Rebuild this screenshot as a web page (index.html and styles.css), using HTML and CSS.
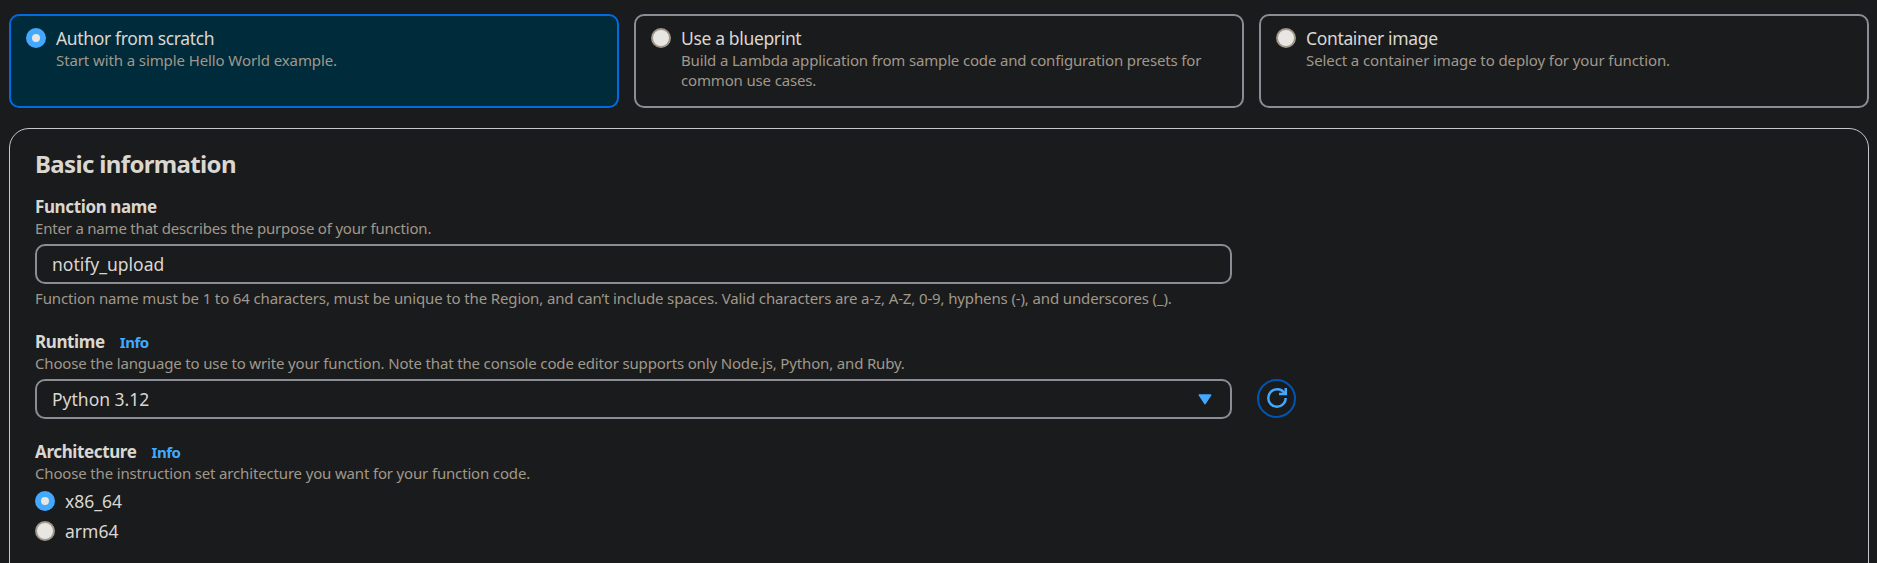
FILE: index.html
```html
<!DOCTYPE html>
<html lang="en">
<head>
<meta charset="utf-8">
<title>Create function</title>
<link rel="stylesheet" href="styles.css">
</head>
<body>
<main class="page">
  <div class="tiles">
    <label class="tile tile-selected">
      <span class="radio radio-checked"></span>
      <span class="tile-text"><span class="tile-title">Author from scratch</span><span class="hint hint-loose">Start with a simple Hello World example.</span></span>
    </label>
    <label class="tile">
      <span class="radio"></span>
      <span class="tile-text"><span class="tile-title">Use a blueprint</span><span class="hint">Build a Lambda application from sample code and configuration presets for common use cases.</span></span>
    </label>
    <label class="tile">
      <span class="radio"></span>
      <span class="tile-text"><span class="tile-title">Container image</span><span class="hint hint-loose">Select a container image to deploy for your function.</span></span>
    </label>
  </div>
  <section class="panel">
    <h2 class="heading">Basic information</h2>
    <div class="field field-name">
      <div class="label">Function name</div>
      <div class="hint hint-tight">Enter a name that describes the purpose of your function.</div>
      <div class="control">notify_upload</div>
      <div class="hint constraint">Function name must be 1 to 64 characters, must be unique to the Region, and can’t include spaces. Valid characters are a-z, A-Z, 0-9, hyphens (-), and underscores (_).</div>
    </div>
    <div class="field field-runtime">
      <div class="label">Runtime <a class="info">Info</a></div>
      <div class="hint">Choose the language to use to write your function. Note that the console code editor supports only Node.js, Python, and Ruby.</div>
      <div class="control-row">
        <div class="control select">Python 3.12
          <svg class="caret" viewBox="0 0 20 20"><path d="M4.4 5h11.2L10 13.6z"/></svg>
        </div>
        <button class="refresh" aria-label="Refresh runtimes">
          <svg class="refresh-icon" viewBox="0 0 20 20"><path d="M12 6h6.75V0"/><path d="M18.75 10A8.75 8.75 0 1 1 10 1.25c3.5 0 6.5 2 7.9 4.75"/></svg>
        </button>
      </div>
    </div>
    <div class="field">
      <div class="label">Architecture <a class="info">Info</a></div>
      <div class="hint">Choose the instruction set architecture you want for your function code.</div>
      <div class="options">
        <label class="option"><span class="radio radio-checked"></span><span class="option-text">x86_64</span></label>
        <label class="option"><span class="radio"></span><span class="option-text">arm64</span></label>
      </div>
    </div>
  </section>
</main>
</body>
</html>
```
FILE: styles.css
```css
* { box-sizing: border-box; }
html, body { height: 100%; }
body {
  margin: 0;
  overflow: hidden;
  background: #1a1b1c;
  color: #dad7d1;
  font-family: "Noto Sans", sans-serif;
  font-size: 17.5px;
  line-height: 25px;
}
.page {
  display: flex;
  flex-direction: column;
  gap: 20px;
  height: 100%;
  padding: 14px 8px 0 9px;
}
.tiles {
  display: grid;
  grid-template-columns: repeat(3, 1fr);
  gap: 15px;
  height: 94px;
  flex: none;
}
.tile {
  display: flex;
  gap: 10px;
  padding: 12px 15px;
  border: 2px solid #8c8c94;
  border-radius: 10px;
}
.tile-selected { border-color: #006ce0; background: #002b3a; }
.tile-text { display: flex; flex-direction: column; margin-top: -2px; }
.tile-title { height: 24px; letter-spacing: -0.35px; }
.hint {
  color: #a0988b;
  font-size: 15px;
  line-height: 20px;
  letter-spacing: -0.16px;
}
.hint-loose { letter-spacing: -0.1px; }
.hint-tight { letter-spacing: -0.2px; }
.radio {
  flex: none;
  width: 20px;
  height: 20px;
  border: 2px solid #a0968a;
  border-radius: 50%;
  background: #e8e6e3;
}
.radio-checked { border: 6px solid #42a9ff; }
.panel {
  flex: none;
  height: 460px;
  padding: 20px 25px;
  border: 1px solid #c6c6cd;
  border-radius: 20px;
}
.heading {
  margin: 0 0 15px;
  font-size: 24px;
  line-height: 30px;
  font-weight: 700;
  letter-spacing: -0.65px;
}
.label {
  height: 24px;
  font-size: 17px;
  font-weight: 700;
  letter-spacing: -0.38px;
}
.info {
  margin-left: 11px;
  color: #42a9ff;
  font-size: 15px;
  letter-spacing: -0.5px;
}
.field-name { height: 135px; }
.field-runtime { height: 110px; }
.control {
  display: flex;
  align-items: center;
  justify-content: space-between;
  width: 1197px;
  height: 40px;
  margin-top: 6px;
  padding: 1px 15px 0;
  border: 2px solid #8c8c94;
  border-radius: 10px;
}
.constraint { margin-top: 4px; letter-spacing: -0.13px; }
.control-row { display: flex; align-items: flex-start; gap: 25px; margin-top: 6px; }
.select { margin-top: 0; }
.caret {
  width: 20px;
  height: 20px;
  fill: #42a9ff;
  stroke: #42a9ff;
  stroke-width: 1.6;
  stroke-linejoin: round;
}
.refresh {
  display: grid;
  place-items: center;
  width: 39px;
  height: 39px;
  padding: 0 0 1px 1px;
  border: 2px solid #0055b3;
  border-radius: 50%;
  background: none;
}
.refresh-icon {
  width: 20px;
  height: 20px;
  fill: none;
  stroke: #42a9ff;
  stroke-width: 2.5;
}
.options { display: flex; flex-direction: column; gap: 10px; margin-top: 8px; }
.option { display: flex; gap: 10px; height: 20px; }
.option-text { margin-top: -2px; }
```
